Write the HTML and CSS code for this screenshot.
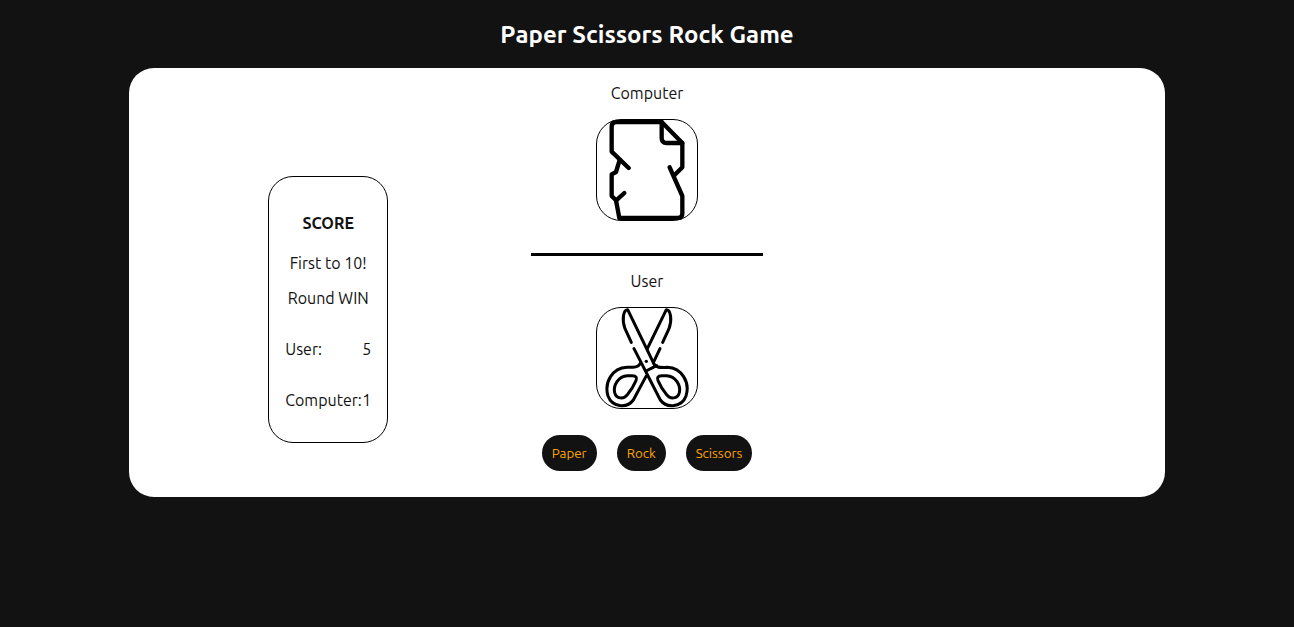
FILE: index.html
```html
<!DOCTYPE html>
<html lang="en">
<head>
<meta charset="utf-8">
<meta name="viewport" content="width=device-width, initial-scale=1">
<title>Paper Scissors Rock Game</title>
<link rel="stylesheet" href="styles.css">
</head>
<body>
<h1 class="title">Paper Scissors Rock Game</h1>
<main class="board">
  <section class="score">
    <h2 class="score-heading">SCORE</h2>
    <p class="score-goal">First to 10!</p>
    <p class="score-round">Round WIN</p>
    <table class="tally">
      <tr><th scope="row">User:</th><td>5</td></tr>
      <tr><th scope="row">Computer:</th><td>1</td></tr>
    </table>
  </section>
  <section class="arena">
    <div class="player player-computer">
      <p class="player-name">Computer</p>
      <div class="hand">
        <svg class="icon icon-paper" viewBox="21 18 300 300" role="img" aria-label="Paper">
          <path d="M89 138L78 174L65 181V246L78 259L88 312H263Q277 312 277 298V246L239 160"/>
          <path d="M116 162L65 113V38Q65 24 79 24H215L277 87V160L253 184"/>
          <path d="M215 24V72Q215 87 230 87H277"/>
          <path d="M78 260L103 237"/>
        </svg>
      </div>
    </div>
    <div class="player player-user">
      <p class="player-name">User</p>
      <div class="hand">
        <svg class="icon icon-scissors" viewBox="21 18 300 300" role="img" aria-label="Scissors">
          <path d="M193 188L113 23C100 23 95 53 105 80L124 121"/>
          <path d="M172 140L229 23C242 23 247 53 237 80L218 121M210 140L190 182"/>
          <path d="M132 140L211 294C231 321 276 315 288 282C301 242 276 198 232 196C214 196 202 199 193 188"/>
          <path d="M168 207L200 191M151 184C145 197 130 196 111 196C66 198 42 242 54 282C66 315 110 321 130 294L168 223"/>
          <path d="M112 221C85 222 69 251 74 272C79 291 101 293 113 277Q127 261 138 236Q144 222 127 221Z"/>
          <path d="M230 221C257 222 273 251 268 272C263 291 241 293 229 277Q215 261 204 236Q198 222 215 221Z"/>
          <circle class="pivot" cx="169" cy="178" r="5"/>
        </svg>
      </div>
    </div>
    <div class="choices">
      <button class="choice" type="button">Paper</button>
      <button class="choice" type="button">Rock</button>
      <button class="choice" type="button">Scissors</button>
    </div>
  </section>
</main>
</body>
</html>
```

FILE: styles.css
```css
body {
  margin: 0;
  background: #121212;
  color: #121212;
  font: 16px/18px Ubuntu, "Noto Sans", sans-serif;
}

h1, h2, p {
  margin: 0;
}

.title {
  padding: 20px 0 18px;
  color: #fff;
  font-size: 24px;
  font-weight: 700;
  font-kerning: none;
  line-height: 30px;
  text-align: center;
}

.board {
  display: grid;
  grid-template-columns: 1fr 240px 1fr;
  width: 80%;
  margin: 0 auto;
  border-radius: 25px;
  background: #fff;
}

.score {
  box-sizing: border-box;
  align-self: center;
  justify-self: center;
  min-width: 120px;
  margin-top: 54px;
  padding: 37px 16px 33px;
  border: 1px solid #000;
  border-radius: 25px;
  text-align: center;
}

.score-heading {
  margin-bottom: 22px;
  font-size: 16px;
}

.score-goal {
  margin-bottom: 17px;
}

.score-round {
  margin-bottom: 33px;
}

.tally {
  width: 100%;
  border-collapse: collapse;
}

.tally th,
.tally td {
  padding: 0;
  font-weight: 400;
  text-align: left;
}

.tally td {
  width: 9px;
}

.tally tr + tr > * {
  padding-top: 33px;
}

.arena {
  padding: 0 4px 26px;
}

.player {
  display: flex;
  flex-direction: column;
  align-items: center;
  gap: 17px;
  padding-top: 16px;
}

.player-computer {
  padding-bottom: 32px;
  border-bottom: 3px solid #000;
}

.hand {
  border: 1px solid #000;
  border-radius: 25px;
}

.icon {
  display: block;
  width: 100px;
  height: 100px;
  fill: none;
  stroke: #000;
  stroke-linecap: round;
  stroke-linejoin: round;
}

.icon-paper {
  stroke-width: 13px;
}

.icon-scissors {
  stroke-width: 9px;
}

.pivot {
  fill: #000;
  stroke: none;
}

.choices {
  display: flex;
  justify-content: center;
  gap: 20px;
  margin-top: 26px;
}

.choice {
  height: 36px;
  padding: 0 10px;
  border: 0;
  border-radius: 20px;
  background: #121212;
  color: orange;
  font-family: Ubuntu, "Noto Sans", sans-serif;
  cursor: pointer;
}
```
